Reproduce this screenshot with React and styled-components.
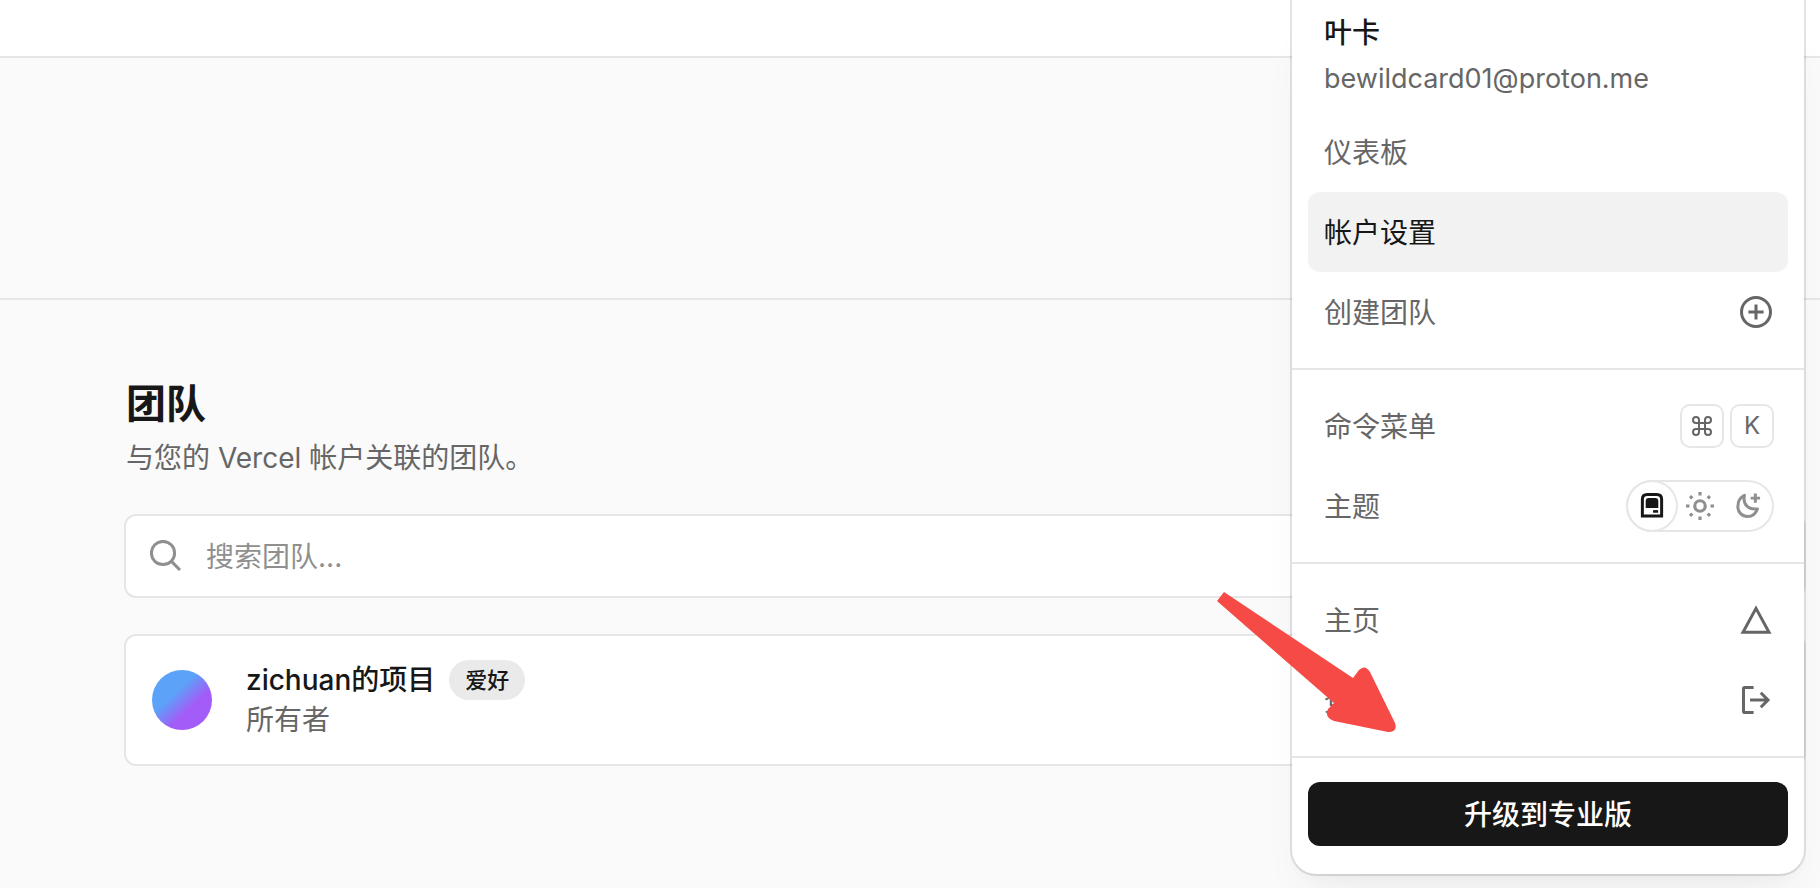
import React from 'react'
import styled, { createGlobalStyle, css } from 'styled-components'

const GlobalStyle = createGlobalStyle`
    * {
        box-sizing: border-box;
    }
    body {
        margin: 0;
        background: #fafafa;
        color: #171717;
        font-family: Inter, "Noto Sans CJK SC", sans-serif;
        font-size: 28px;
        line-height: 40px;
    }
    button, input {
        font: inherit;
    }
`
const Page = styled.div`
    position: relative;
    min-height: 100vh;
    overflow: hidden;
`
const TopBar = styled.header`
    height: 58px;
    background: #fff;
    border-bottom: 2px solid #e6e6e6;
`
const Banner = styled.div`
    height: 242px;
    border-bottom: 2px solid #e6e6e6;
`
const Main = styled.main`
    display: flex;
    flex-direction: column;
    padding: 76px 14px 0 124px;
`
const Heading = styled.div`
    padding: 0 2px;
    margin-bottom: 36px;
`
const Title = styled.h1`
    margin: 0;
    font-size: 40px;
    line-height: 56px;
    font-weight: 600;
`
const SubTitle = styled.p`
    margin: 6px 0 0;
    color: #666;
`
const SearchBox = styled.label`
    display: flex;
    align-items: center;
    height: 84px;
    padding: 0 24px;
    gap: 24px;
    background: #fff;
    border: 2px solid #e6e6e6;
    border-radius: 12px;
    color: #8f8f8f;
`
const SearchInput = styled.input`
    flex: 1;
    min-width: 0;
    padding: 2px 0 0;
    border: 0;
    outline: 0;
    background: transparent;
    color: #171717;
    &::placeholder {
        color: #8f8f8f;
        opacity: 1;
    }
`
const TeamCard = styled.section`
    display: flex;
    align-items: center;
    height: 132px;
    margin-top: 36px;
    padding: 0 26px;
    gap: 34px;
    background: #fff;
    border: 2px solid #e6e6e6;
    border-radius: 12px;
`
const Avatar = styled.div`
    width: 60px;
    height: 60px;
    border-radius: 50%;
    background: linear-gradient(137deg, #5ba2f8 38%, #a35cf7 64%);
`
const TeamName = styled.div`
    display: flex;
    align-items: center;
    gap: 14px;
    font-weight: 500;
`
const Badge = styled.span`
    padding: 0 16px;
    border-radius: 20px;
    background: #eaeaea;
    font-size: 22px;
`
const Role = styled.div`
    color: #666;
`
const Menu = styled.aside`
    position: absolute;
    top: 0;
    right: 16px;
    width: 512px;
    padding-bottom: 28px;
    background: #fff;
    border-radius: 0 0 24px 24px;
    box-shadow: 0 0 0 2px rgba(0, 0, 0, 0.1), 0 2px 2px rgba(0, 0, 0, 0.02),
        0 8px 16px -8px rgba(0, 0, 0, 0.04), 0 32px 48px -16px rgba(0, 0, 0, 0.06);
`
const Account = styled.div`
    height: 112px;
    padding: 13px 32px 0;
`
const AccountName = styled.div`
    font-weight: 500;
`
const Email = styled.div`
    margin-top: 6px;
    color: #666;
    font-size: 27px;
`
const Group = styled.nav`
    padding: ${props => (props.$first ? '0 16px 16px' : '16px')};
    border-bottom: 2px solid #e6e6e6;
`
const rowStyle = css`
    display: flex;
    align-items: center;
    justify-content: space-between;
    height: 80px;
    padding: 0 16px;
    border: 0;
    border-radius: 12px;
    width: 100%;
    color: ${props => (props.$active ? '#171717' : '#666')};
    background: ${props => (props.$active ? '#f2f2f2' : 'transparent')};
    text-decoration: none;
    text-align: left;
`
const LinkRow = styled.a`
    ${rowStyle}
`
const ButtonRow = styled.button`
    ${rowStyle}
`
const ThemeRow = styled.div`
    ${rowStyle}
`
const Label = styled.span`
    padding-top: 2px;
`
const Keys = styled.span`
    display: flex;
    gap: 10px;
`
const Key = styled.kbd`
    display: flex;
    align-items: center;
    justify-content: center;
    width: 40px;
    height: 40px;
    border-radius: 8px;
    box-shadow: 0 0 0 2px #e6e6e6;
    font-family: inherit;
    font-size: 24px;
`
const ThemeSwitch = styled.div`
    display: flex;
    border-radius: 24px;
    box-shadow: 0 0 0 2px #e6e6e6;
`
const ThemeButton = styled.button`
    display: flex;
    align-items: center;
    justify-content: center;
    width: 48px;
    height: 48px;
    padding: 0;
    border: 0;
    border-radius: 50%;
    background: transparent;
    color: ${props => (props.$active ? '#171717' : '#8f8f8f')};
    box-shadow: ${props => (props.$active ? '0 0 0 2px #e6e6e6' : 'none')};
`
const Upgrade = styled.button`
    display: block;
    width: calc(100% - 32px);
    height: 64px;
    margin: 24px 16px 0;
    padding: 2px 0 0;
    border: 0;
    border-radius: 12px;
    background: #171717;
    color: #fff;
    font-weight: 500;
`
const Arrow = styled.svg`
    position: absolute;
    top: 590px;
    right: 422px;
`

const Icon = ({ size = 32, children }) => (
  <svg width={size} height={size} viewBox="0 0 16 16" fill="none" stroke="currentColor" strokeWidth="1.5" aria-hidden="true">
    {children}
  </svg>
)

const SearchIcon = () => (
  <Icon>
    <circle cx="6.5" cy="6.5" r="5.8" />
    <path d="M10.7 10.7L15 15" />
  </Icon>
)
const PlusIcon = () => (
  <Icon>
    <circle cx="8" cy="8" r="7.25" />
    <path d="M8 4.2v7.6M4.2 8h7.6" />
  </Icon>
)
const CommandIcon = () => (
  <svg width="20" height="20" viewBox="0 0 20 20" fill="none" stroke="currentColor" strokeWidth="2" aria-label="⌘">
    <path d="M7 7V4a3 3 0 1 0-3 3h12a3 3 0 1 0-3-3v12a3 3 0 1 0 3-3H4a3 3 0 1 0 3 3z" />
  </svg>
)
const DeviceIcon = () => (
  <Icon size={28}>
    <path d="M2.5 13.7V4.2Q2.5 1.4 5.3 1.4H10.7Q13.5 1.4 13.5 4.2V13.7Z" strokeWidth="1.7" />
    <path d="M4.4 5.2Q4.4 3.4 6.2 3.4H9.8Q11.6 3.4 11.6 5.2V9.2H4.4Z" fill="currentColor" stroke="none" />
    <path d="M8.6 11.1h2.9" strokeWidth="1.5" />
  </Icon>
)
const SunIcon = () => (
  <Icon size={28}>
    <circle cx="8" cy="8" r="3" strokeWidth="1.8" />
    <path d="M8 0v2M8 14v2M0 8h2M14 8h2M2.3 2.3l1.3 1.3M12.4 12.4l1.3 1.3M2.3 13.7l1.3-1.3M12.4 3.6l1.3-1.3" strokeWidth="1.8" />
  </Icon>
)
const MoonIcon = () => (
  <Icon size={28}>
    <path d="M6 1.9C4.8 7 8 10.3 13.4 9.7C12.4 12.5 10.4 14 7.8 14C4.5 14 2.2 11.5 2.2 8.4C2.2 5.3 3.8 2.9 6 1.9Z" strokeWidth="1.7" strokeLinejoin="round" />
    <path d="M12.2 .8v5.4M9.5 3.5h5.4" strokeWidth="1.7" />
  </Icon>
)
const TriangleIcon = () => (
  <Icon>
    <path d="M8 2.2L14.5 14.1H1.5Z" />
  </Icon>
)
const LogoutIcon = () => (
  <Icon>
    <path d="M6.8 1.75H2.4Q1.75 1.75 1.75 2.4V13.6Q1.75 14.25 2.4 14.25H6.8" />
    <path d="M5 8H14M10.4 4.4L14 8L10.4 11.6" />
  </Icon>
)

const AccountMenu = () => (
  <Menu>
    <Account>
      <AccountName>叶卡</AccountName>
      <Email>bewildcard01@proton.me</Email>
    </Account>
    <Group $first>
      <LinkRow href="#dashboard"><Label>仪表板</Label></LinkRow>
      <LinkRow href="#settings" $active><Label>帐户设置</Label></LinkRow>
      <LinkRow href="#new-team"><Label>创建团队</Label><PlusIcon /></LinkRow>
    </Group>
    <Group>
      <ButtonRow>
        <Label>命令菜单</Label>
        <Keys>
          <Key><CommandIcon /></Key>
          <Key>K</Key>
        </Keys>
      </ButtonRow>
      <ThemeRow>
        <Label>主题</Label>
        <ThemeSwitch>
          <ThemeButton $active aria-label="system"><DeviceIcon /></ThemeButton>
          <ThemeButton aria-label="light"><SunIcon /></ThemeButton>
          <ThemeButton aria-label="dark"><MoonIcon /></ThemeButton>
        </ThemeSwitch>
      </ThemeRow>
    </Group>
    <Group>
      <LinkRow href="#home"><Label>主页</Label><TriangleIcon /></LinkRow>
      <ButtonRow><Label>登出</Label><LogoutIcon /></ButtonRow>
    </Group>
    <Upgrade>升级到专业版</Upgrade>
  </Menu>
)

const App = () => {
  return (
    <Page>
      <GlobalStyle />
      <TopBar />
      <Banner />
      <Main>
        <Heading>
          <Title>团队</Title>
          <SubTitle>与您的 Vercel 帐户关联的团队。</SubTitle>
        </Heading>
        <SearchBox>
          <SearchIcon />
          <SearchInput type="text" placeholder="搜索团队..." aria-label="搜索团队" />
        </SearchBox>
        <TeamCard>
          <Avatar />
          <div>
            <TeamName>zichuan的项目<Badge>爱好</Badge></TeamName>
            <Role>所有者</Role>
          </div>
        </TeamCard>
      </Main>
      <AccountMenu />
      <Arrow width="182" height="144" viewBox="0 0 182 144" aria-hidden="true">
        <path
          fill="#f54a45"
          d="M8 2L137 88L143 80Q149 74 154 82L179 133Q182 142 172 142L118 131Q108 127 112 119L118 113L1 11Z"
        />
      </Arrow>
    </Page>
  )
}

export default App
